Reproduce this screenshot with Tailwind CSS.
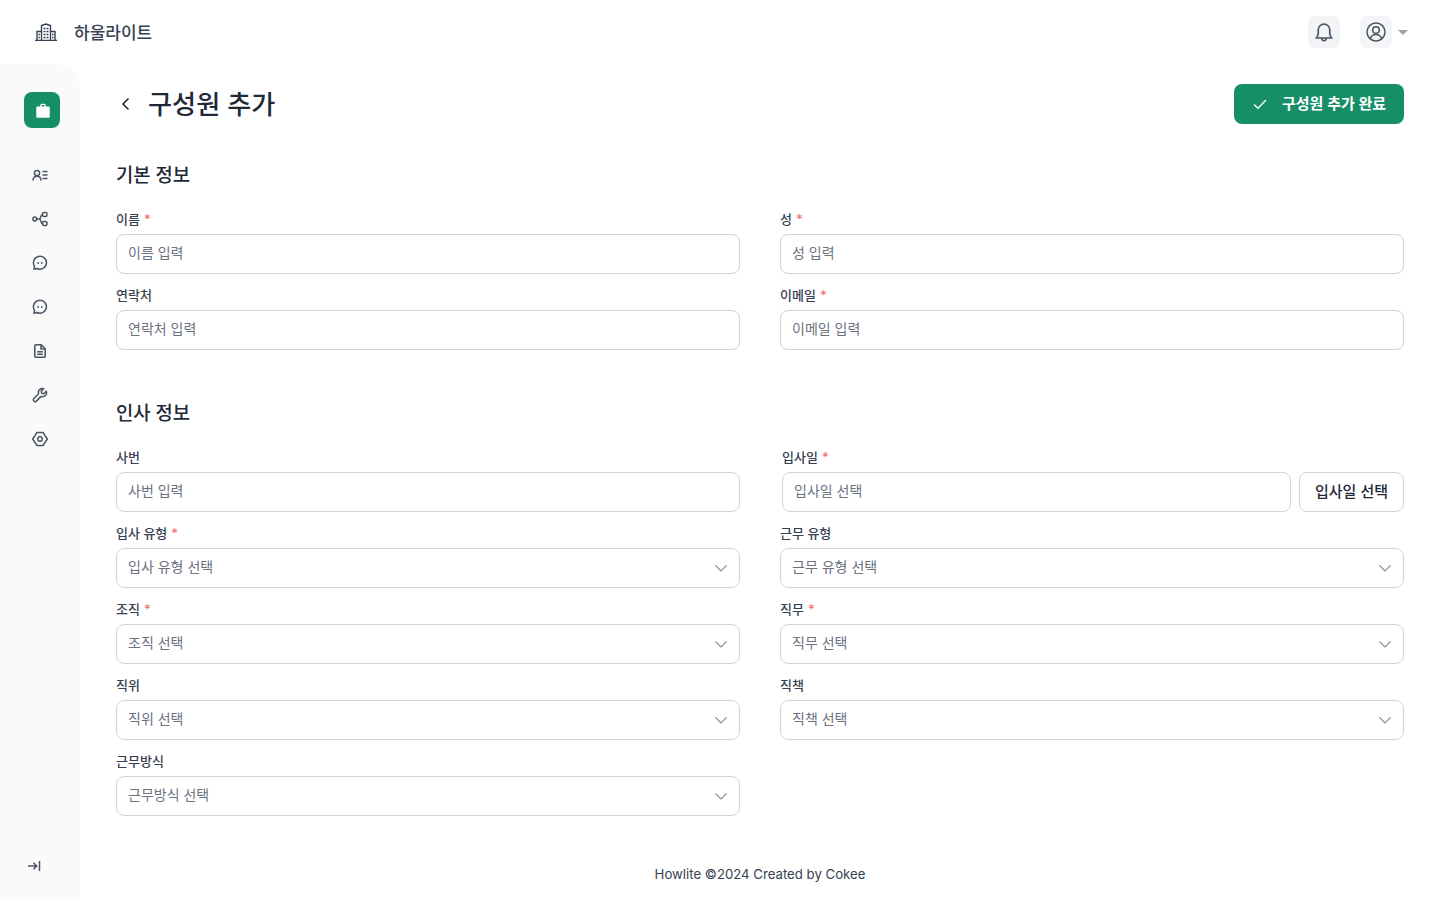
<!DOCTYPE html>
<html lang="ko">
  <head>
    <meta charset="UTF-8" />
    <title>구성원 추가</title>
    <script src="https://cdn.jsdelivr.net/npm/@tailwindcss/browser@4"></script>
  </head>
  <body class="h-[900px] overflow-hidden flex flex-col bg-white text-[#1f2937] font-['Inter','Noto_Sans_CJK_KR',sans-serif]">
    <!-- Header -->
    <header class="h-16 flex items-center justify-between pl-[35px] pr-[32px]">
      <div class="flex items-center gap-[17px]">
        <svg class="w-[22px] h-[18px] text-[#374151]" viewBox="0 0 22 18" fill="none" stroke="currentColor" stroke-width="1.400">
          <path d="M0 17.400h22M2 17.400V8.500h4.500M15.500 8.500H20V17.400M6.500 17.400V2.500L11 1l4.500 1.500V17.400" />
          <path d="M8.500 5.500h2M11.500 5.500h2M8.500 8.500h2M11.500 8.500h2M8.500 11.500h2M11.500 11.500h2M8.500 14.500h2M11.500 14.500h2M3.500 11.500h1.500M3.500 14.500h1.500M17 11.500h1.500M17 14.500h1.500" />
        </svg>
        <span class="pt-[3px] text-[17px] font-medium text-[#374151]">하울라이트</span>
      </div>
      <div class="flex items-center">
        <button class="w-8 h-8 rounded-md bg-[#f3f4f6] flex items-center justify-center">
          <svg class="w-6 h-6 text-[#4b5563]" viewBox="0 0 20 20" fill="none" stroke="currentColor" stroke-width="1.400" stroke-linejoin="round" stroke-linecap="round">
            <path d="M3.500 15h13c-1-1-1.700-2-1.700-4V8.200a4.800 4.800 0 0 0-9.600 0V11c0 2-.7 3-1.700 4Z" />
            <path d="M8.200 15.500a1.800 1.800 0 0 0 3.600 0" />
          </svg>
        </button>
        <button class="ml-5 w-8 h-8 rounded-md bg-[#f3f4f6] flex items-center justify-center">
          <svg class="w-5 h-5 text-[#4b5563]" viewBox="0 0 20 20" fill="none" stroke="currentColor" stroke-width="1.500">
            <circle cx="10" cy="10" r="9" />
            <circle cx="10" cy="8" r="3.300" />
            <path d="M4.500 16.500c.8-2.600 2.800-4 5.500-4s4.700 1.400 5.500 4" />
          </svg>
        </button>
        <span class="ml-[6px] w-0 h-0 border-x-[5px] border-x-transparent border-t-[5px] border-t-[#9ca3af]"></span>
      </div>
    </header>

    <div class="flex flex-1 min-h-0">
      <!-- Sidebar -->
      <aside class="w-20 bg-[#fafafa] rounded-tr-3xl flex flex-col items-center pt-7 pb-[26px] text-[#4b5563]">
        <div class="w-9 h-9 rounded-lg bg-[#168f68] flex items-center justify-center ml-[4px] pl-[1px] pt-[1px]">
          <svg class="w-[18px] h-[18px] text-white" viewBox="0 0 16 16" fill="currentColor">
            <path d="M5.500 4V3a1.500 1.500 0 0 1 1.500-1.500h2A1.500 1.500 0 0 1 10.500 3v1H13a1 1 0 0 1 1 1v8a1 1 0 0 1-1 1H3a1 1 0 0 1-1-1V5a1 1 0 0 1 1-1h2.500Zm1.200 0h2.600V3a.3.300 0 0 0-.3-.3H7a.3.300 0 0 0-.3.300v1Z" />
          </svg>
        </div>
        <nav class="mt-[39px] flex flex-col items-center gap-7">
          <svg class="w-4 h-4" viewBox="0 0 16 16" fill="none" stroke="currentColor" stroke-width="1.500" stroke-linecap="round">
            <circle cx="5" cy="6" r="2.600" />
            <path d="M1 13c.3-2.300 1.800-3.700 4-3.700S8.700 10.700 9 13" />
            <path d="M10.500 4.500H15.500M10.500 8H15.500M10.500 11.500H15.500" stroke-linecap="butt" />
          </svg>
          <svg class="w-4 h-4" viewBox="0 0 16 16" fill="none" stroke="currentColor" stroke-width="1.500">
            <circle cx="2.800" cy="8" r="1.900" />
            <rect x="10.500" y="1.500" width="4.500" height="4" rx="1.500" />
            <rect x="10.500" y="10.500" width="4.500" height="4" rx="1.500" />
            <path d="M4.700 8h3.800M7.500 8c1.500 0 1-4.500 3-4.500M7.500 8c1.500 0 1 4.500 3 4.500" />
          </svg>
          <svg class="w-4 h-4" viewBox="0 0 16 16" fill="none" stroke="currentColor" stroke-width="1.500" stroke-linejoin="round">
            <path d="M1.800 14.200 2.600 11.400A6.500 6.500 0 1 1 5 13.500Z" />
            <circle cx="6.200" cy="8" r=".9" fill="currentColor" stroke="none" />
            <circle cx="9.800" cy="8" r=".9" fill="currentColor" stroke="none" />
          </svg>
          <svg class="w-4 h-4" viewBox="0 0 16 16" fill="none" stroke="currentColor" stroke-width="1.500" stroke-linejoin="round">
            <path d="M1.800 14.200 2.600 11.400A6.500 6.500 0 1 1 5 13.500Z" />
            <circle cx="6.200" cy="8" r=".9" fill="currentColor" stroke="none" />
            <circle cx="9.800" cy="8" r=".9" fill="currentColor" stroke="none" />
          </svg>
          <svg class="w-4 h-4" viewBox="0 0 16 16" fill="none" stroke="currentColor" stroke-width="1.600" stroke-linejoin="round">
            <path d="M2.800 2.800a1 1 0 0 1 1-1h5.400l4 4v7.400a1 1 0 0 1-1 1H3.800a1 1 0 0 1-1-1Z" />
            <path d="M9 2v4h4M5.200 8.800h5.600M5.200 11.200h5.600" />
          </svg>
          <svg class="w-4 h-4" viewBox="0 0 16 16" fill="none" stroke="currentColor" stroke-width="1.500" stroke-linejoin="round">
            <path d="M14.300 4.200 11.800 6.700 9.700 6.200 9.200 4.100 11.700 1.700A4 4 0 0 0 6.600 6.800L1.900 11.500a1.800 1.800 0 0 0 2.500 2.600L9.100 9.400A4 4 0 0 0 14.300 4.200Z" />
          </svg>
          <svg class="w-4 h-4" viewBox="0 0 16 16" fill="none" stroke="currentColor" stroke-width="1.500" stroke-linejoin="round">
            <path d="M4.800 1.500h6.400l1.300 2.400 2.900 4.100-2.900 4.100-1.300 2.400H4.800l-1.300-2.400L.6 8l2.900-4.100Z" />
            <circle cx="8" cy="8" r="2.200" />
          </svg>
        </nav>
        <svg class="mt-auto w-4 h-4 text-[#4b5563] -translate-x-[6px]" viewBox="0 0 16 16" fill="none" stroke="currentColor" stroke-width="1.500">
          <path d="M2 8h8.500M7.500 4.800 10.700 8l-3.200 3.200M13.500 3v10" />
        </svg>
      </aside>

      <!-- Main -->
      <main class="flex-1 min-w-0 flex flex-col px-9 pt-5">
        <div class="flex items-center justify-between h-10">
          <div class="flex items-center">
            <svg class="w-5 h-5 text-[#1f2937]" viewBox="0 0 20 20" fill="none" stroke="currentColor" stroke-width="1.600">
              <path d="M12.500 4.500 7 10l5.500 5.500" />
            </svg>
            <h1 class="ml-3 pt-[2px] text-[26.200px] font-medium text-[#1f2937]">구성원 추가</h1>
          </div>
          <button class="h-10 w-[170px] rounded-lg bg-[#168f68] text-white flex items-center pl-[18px] text-[15px] font-semibold">
            <svg class="w-4 h-4 mr-[14px]" viewBox="0 0 16 16" fill="none" stroke="currentColor" stroke-width="1.300">
              <path d="M2 8.500 6 12.300 14 4" />
            </svg>
            구성원 추가 완료
          </button>
        </div>

        <h2 class="mt-10 mb-5 h-6 leading-6 text-[18.800px] font-medium text-[#1f2937]">기본 정보</h2>
        <div class="grid grid-cols-2 gap-x-10 gap-y-[10px]">
          <div>
            <label class="flex items-center pt-[2px] h-[22px] mb-1 text-[13px] font-medium text-[#374151]">이름<span class="ml-[4px] text-[#f87171] text-[13px]">*</span></label>
            <input placeholder="이름 입력" class="w-full h-10 px-[11px] pb-[4px] border border-[#d1d5db] rounded-lg text-sm placeholder:text-[#6b7280]" />
          </div>
          <div>
            <label class="flex items-center pt-[2px] h-[22px] mb-1 text-[13px] font-medium text-[#374151]">성<span class="ml-[4px] text-[#f87171] text-[13px]">*</span></label>
            <input placeholder="성 입력" class="w-full h-10 px-[11px] pb-[4px] border border-[#d1d5db] rounded-lg text-sm placeholder:text-[#6b7280]" />
          </div>
          <div>
            <label class="flex items-center pt-[2px] h-[22px] mb-1 text-[13px] font-medium text-[#374151]">연락처</label>
            <input placeholder="연락처 입력" class="w-full h-10 px-[11px] pb-[4px] border border-[#d1d5db] rounded-lg text-sm placeholder:text-[#6b7280]" />
          </div>
          <div>
            <label class="flex items-center pt-[2px] h-[22px] mb-1 text-[13px] font-medium text-[#374151]">이메일<span class="ml-[4px] text-[#f87171] text-[13px]">*</span></label>
            <input placeholder="이메일 입력" class="w-full h-10 px-[11px] pb-[4px] border border-[#d1d5db] rounded-lg text-sm placeholder:text-[#6b7280]" />
          </div>
        </div>

        <h2 class="mt-[52px] mb-5 h-6 leading-6 text-[18.800px] font-medium text-[#1f2937]">인사 정보</h2>
        <div class="grid grid-cols-2 gap-x-10 gap-y-[10px]">
          <div>
            <label class="flex items-center pt-[2px] h-[22px] mb-1 text-[13px] font-medium text-[#374151]">사번</label>
            <input placeholder="사번 입력" class="w-full h-10 px-[11px] pb-[4px] border border-[#d1d5db] rounded-lg text-sm placeholder:text-[#6b7280]" />
          </div>
          <div class="pl-[2px]">
            <label class="flex items-center pt-[2px] h-[22px] mb-1 text-[13px] font-medium text-[#374151]">입사일<span class="ml-[4px] text-[#f87171] text-[13px]">*</span></label>
            <div class="flex gap-2">
              <input placeholder="입사일 선택" class="flex-1 min-w-0 h-10 px-[11px] pb-[4px] border border-[#d1d5db] rounded-lg text-sm placeholder:text-[#6b7280]" />
              <button class="h-10 w-[105px] border border-[#d1d5db] rounded-lg text-[15px] font-medium text-[#1f2937]">입사일 선택</button>
            </div>
          </div>

          <div>
            <label class="flex items-center pt-[2px] h-[22px] mb-1 text-[13px] font-medium text-[#374151]">입사 유형<span class="ml-[4px] text-[#f87171] text-[13px]">*</span></label>
            <div class="h-10 px-[11px] pb-[2px] border border-[#d1d5db] rounded-lg text-sm text-[#6b7280] flex items-center justify-between">입사 유형 선택
              <svg class="w-4 h-4 text-[#8b8f96] mr-[-1px] mt-[2px]" viewBox="0 0 16 16" fill="none" stroke="currentColor" stroke-width="1.200"><path d="M2.500 5.500 8 11l5.500-5.500" /></svg>
            </div>
          </div>
          <div>
            <label class="flex items-center pt-[2px] h-[22px] mb-1 text-[13px] font-medium text-[#374151]">근무 유형</label>
            <div class="h-10 px-[11px] pb-[2px] border border-[#d1d5db] rounded-lg text-sm text-[#6b7280] flex items-center justify-between">근무 유형 선택
              <svg class="w-4 h-4 text-[#8b8f96] mr-[-1px] mt-[2px]" viewBox="0 0 16 16" fill="none" stroke="currentColor" stroke-width="1.200"><path d="M2.500 5.500 8 11l5.500-5.500" /></svg>
            </div>
          </div>

          <div>
            <label class="flex items-center pt-[2px] h-[22px] mb-1 text-[13px] font-medium text-[#374151]">조직<span class="ml-[4px] text-[#f87171] text-[13px]">*</span></label>
            <div class="h-10 px-[11px] pb-[2px] border border-[#d1d5db] rounded-lg text-sm text-[#6b7280] flex items-center justify-between">조직 선택
              <svg class="w-4 h-4 text-[#8b8f96] mr-[-1px] mt-[2px]" viewBox="0 0 16 16" fill="none" stroke="currentColor" stroke-width="1.200"><path d="M2.500 5.500 8 11l5.500-5.500" /></svg>
            </div>
          </div>
          <div>
            <label class="flex items-center pt-[2px] h-[22px] mb-1 text-[13px] font-medium text-[#374151]">직무<span class="ml-[4px] text-[#f87171] text-[13px]">*</span></label>
            <div class="h-10 px-[11px] pb-[2px] border border-[#d1d5db] rounded-lg text-sm text-[#6b7280] flex items-center justify-between">직무 선택
              <svg class="w-4 h-4 text-[#8b8f96] mr-[-1px] mt-[2px]" viewBox="0 0 16 16" fill="none" stroke="currentColor" stroke-width="1.200"><path d="M2.500 5.500 8 11l5.500-5.500" /></svg>
            </div>
          </div>

          <div>
            <label class="flex items-center pt-[2px] h-[22px] mb-1 text-[13px] font-medium text-[#374151]">직위</label>
            <div class="h-10 px-[11px] pb-[2px] border border-[#d1d5db] rounded-lg text-sm text-[#6b7280] flex items-center justify-between">직위 선택
              <svg class="w-4 h-4 text-[#8b8f96] mr-[-1px] mt-[2px]" viewBox="0 0 16 16" fill="none" stroke="currentColor" stroke-width="1.200"><path d="M2.500 5.500 8 11l5.500-5.500" /></svg>
            </div>
          </div>
          <div>
            <label class="flex items-center pt-[2px] h-[22px] mb-1 text-[13px] font-medium text-[#374151]">직책</label>
            <div class="h-10 px-[11px] pb-[2px] border border-[#d1d5db] rounded-lg text-sm text-[#6b7280] flex items-center justify-between">직책 선택
              <svg class="w-4 h-4 text-[#8b8f96] mr-[-1px] mt-[2px]" viewBox="0 0 16 16" fill="none" stroke="currentColor" stroke-width="1.200"><path d="M2.500 5.500 8 11l5.500-5.500" /></svg>
            </div>
          </div>

          <div>
            <label class="flex items-center pt-[2px] h-[22px] mb-1 text-[13px] font-medium text-[#374151]">근무방식</label>
            <div class="h-10 px-[11px] pb-[2px] border border-[#d1d5db] rounded-lg text-sm text-[#6b7280] flex items-center justify-between">근무방식 선택
              <svg class="w-4 h-4 text-[#8b8f96] mr-[-1px] mt-[2px]" viewBox="0 0 16 16" fill="none" stroke="currentColor" stroke-width="1.200"><path d="M2.500 5.500 8 11l5.500-5.500" /></svg>
            </div>
          </div>
        </div>

        <footer class="mt-12 text-center text-[13.200px] leading-5 text-[#374151]">Howlite ©2024 Created by Cokee</footer>
      </main>
    </div>
  </body>
</html>
